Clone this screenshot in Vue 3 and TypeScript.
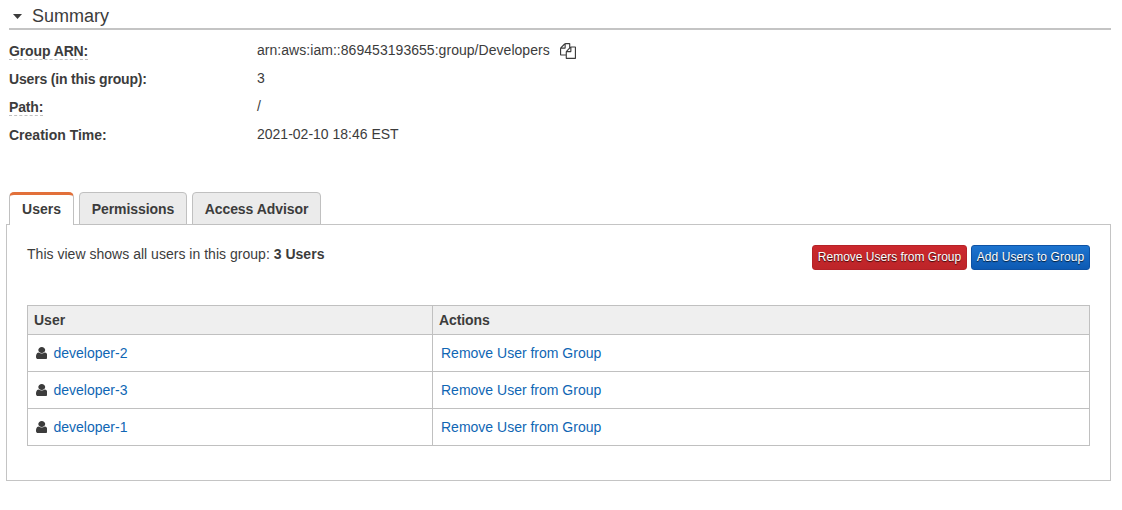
<script setup lang="ts">
interface Detail {
  label: string
  value: string
  hint?: boolean
  copy?: boolean
  key: string
}

const details: Detail[] = [
  { key: 'arn', label: 'Group ARN:', value: 'arn:aws:iam::869453193655:group/Developers', hint: true, copy: true },
  { key: 'count', label: 'Users (in this group):', value: '3' },
  { key: 'path', label: 'Path:', value: '/', hint: true },
  { key: 'time', label: 'Creation Time:', value: '2021-02-10 18:46 EST' },
]

const tabs: { name: string; key: string }[] = [
  { name: 'Users', key: 'users' },
  { name: 'Permissions', key: 'permissions' },
  { name: 'Access Advisor', key: 'advisor' },
]
const activeTab = 'users'
const users: string[] = ['developer-2', 'developer-3', 'developer-1']
</script>

<template>
  <main class="page">
    <header class="summary">
      <svg class="caret" viewBox="0 0 9 5"><path d="M0 0H9L4.5 5Z" /></svg>
      <h2>Summary</h2>
    </header>

    <dl class="details">
      <div v-for="d in details" :key="d.key" class="detail">
        <dt><span :class="['l-' + d.key, { hint: d.hint }]">{{ d.label }}</span></dt>
        <dd>
          <span :class="'v-' + d.key">{{ d.value }}</span>
          <svg v-if="d.copy" class="copy" viewBox="0 0 1792 1792">
            <path d="M1696 384q40 0 68 28t28 68v1216q0 40-28 68t-68 28h-960q-40 0-68-28t-28-68v-288h-544q-40 0-68-28t-28-68v-672q0-40 20-88t48-76l408-408q28-28 76-48t88-20h416q40 0 68 28t28 68v328q68-40 128-40h416zm-544 213l-299 299h299v-299zm-640-384l-299 299h299v-299zm196 647l316-316v-416h-384v416q0 40-28 68t-68 28h-416v640h512v-256q0-40 20-88t48-76zm956 804v-1152h-384v416q0 40-28 68t-68 28h-416v640h896z" />
          </svg>
        </dd>
      </div>
    </dl>

    <nav class="tabs">
      <div v-for="t in tabs" :key="t.key" :class="['tab', 'tab-' + t.key, { active: t.key === activeTab }]">{{ t.name }}</div>
    </nav>

    <section class="panel">
      <div class="toolbar">
        <p class="intro">This view shows all users in this group: <b>3 Users</b></p>
        <div class="buttons">
          <button class="btn red">Remove Users from Group</button>
          <button class="btn blue">Add Users to Group</button>
        </div>
      </div>

      <div class="table">
        <div class="row head">
          <div class="cell">User</div>
          <div class="cell">Actions</div>
        </div>
        <div v-for="u in users" :key="u" class="row">
          <div class="cell">
            <svg class="person" viewBox="256 128 1280 1536" preserveAspectRatio="none">
              <path d="M1536 1399q0 109-62.5 187t-150.5 78h-854q-88 0-150.5-78t-62.5-187q0-85 8.5-160.5t31.5-152 58.5-131 94-89 134.5-34.5q131 128 313 128t313-128q76 0 134.5 34.5t94 89 58.5 131 31.5 152 8.5 160.5zm-256-887q0 159-112.5 271.5t-271.5 112.5-271.5-112.5-112.5-271.5 112.5-271.5 271.5-112.5 271.5 112.5 112.5 271.5z" />
            </svg>
            <a class="name">{{ u }}</a>
          </div>
          <div class="cell"><a class="action">Remove User from Group</a></div>
        </div>
      </div>
    </section>
  </main>
</template>

<style>
body {
  background: #fff;
}
</style>

<style scoped>
.page {
  box-sizing: border-box;
  width: 1122px;
  height: 510px;
  overflow: hidden;
  padding: 4px 11px 0 6px;
  font: 14px/20px "Liberation Sans", Arial, sans-serif;
  color: #3c3c3c;
}
.summary {
  display: flex;
  align-items: center;
  height: 24px;
  margin-left: 3px;
  padding-left: 4px;
  border-bottom: 2px solid #c4c4c4;
}
.caret {
  width: 9px;
  height: 5px;
  margin-top: 1px;
  fill: #3c3c3c;
}
h2 {
  margin: 0 0 0 10px;
  font-size: 18px;
  font-weight: 400;
  line-height: 24px;
}
.details {
  margin: 7px 0 0 3px;
}
.detail {
  display: grid;
  grid-template-columns: 248px 1fr;
  height: 28px;
}
dt {
  padding-top: 6px;
  font-weight: 700;
  line-height: 16px;
}
dt span {
  display: inline-block;
}
.l-arn {
  letter-spacing: -0.12px;
}
.l-count {
  letter-spacing: -0.17px;
}
.l-path {
  letter-spacing: -0.15px;
}
.v-arn {
  letter-spacing: 0.04px;
}
.hint {
  border-bottom: 1px dashed #c0c0c0;
}
dd {
  display: flex;
  align-items: flex-start;
  margin: 0;
  padding-top: 3px;
}
.copy {
  width: 16px;
  height: 16px;
  margin: 3px 0 0 10px;
  fill: #3c3c3c;
}
.tabs {
  display: flex;
  gap: 5px;
  height: 33px;
  margin: 43px 0 0 3px;
  position: relative;
}
.tab {
  box-sizing: border-box;
  height: 33px;
  border: 1px solid #c0c0c0;
  border-radius: 4px 4px 0 0;
  background: #ebebeb;
  font-weight: 700;
  line-height: 33px;
  text-align: center;
}
.tab-users { width: 65px; }
.tab-permissions { width: 108px; letter-spacing: -0.05px; }
.tab-advisor { width: 129px; letter-spacing: -0.06px; }
.tab.active {
  border-top: 3px solid #e2703a;
  border-bottom: 0;
  border-radius: 5px 5px 0 0;
  background: #fff;
  line-height: 29px;
}
.panel {
  box-sizing: border-box;
  height: 257px;
  margin-top: -1px;
  padding: 20px 20px 0;
  border: 1px solid #c4c4c4;
}
.toolbar {
  display: flex;
  justify-content: space-between;
  height: 60px;
}
.intro {
  margin: -1px 0 0;
  letter-spacing: 0.02px;
}
.buttons {
  display: flex;
  gap: 4px;
  height: 25px;
}
.btn {
  box-sizing: border-box;
  height: 25px;
  padding: 0 0 2px;
  border-radius: 3px;
  font: 12px/20px "Liberation Sans", Arial, sans-serif;
  color: #fff;
  text-shadow: 0 1px 1px rgba(0, 0, 0, 0.75);
  white-space: nowrap;
}
.red {
  width: 155px;
  border: 1px solid #b52227;
  background: linear-gradient(#cc282d, #bd2529);
}
.blue {
  width: 119px;
  border: 1px solid #0e52a4;
  background: linear-gradient(#1d74cf, #0d5ab3);
  letter-spacing: 0.08px;
}
.table {
  border: 1px solid #c0c0c0;
}
.row {
  display: grid;
  grid-template-columns: 404px 1fr;
  height: 36px;
  border-top: 1px solid #c0c0c0;
}
.head {
  height: 28px;
  border-top: 0;
  background: #efefef;
  font-weight: 700;
}
.cell {
  display: flex;
  align-items: center;
  padding-left: 8px;
}
.cell + .cell {
  border-left: 1px solid #c0c0c0;
}
.head .cell {
  padding-left: 6px;
}
.head .cell + .cell {
  letter-spacing: -0.1px;
}
.person {
  width: 11.5px;
  height: 12px;
  margin: 0 6.5px 0 -0.5px;
  fill: #3c3c3c;
}
a {
  color: #0f66b4;
}
</style>
